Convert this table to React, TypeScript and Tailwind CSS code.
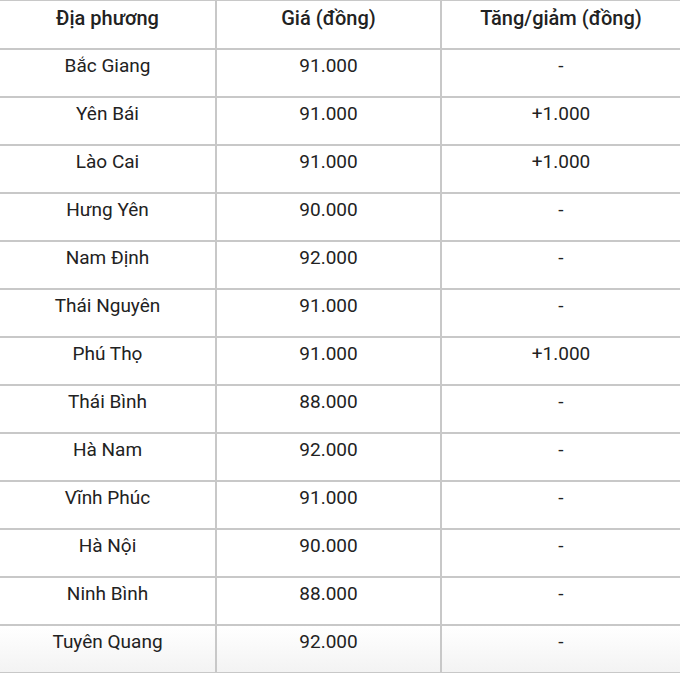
import React from "react";

const rows: [string, string, string][] = [
  ["Bắc Giang", "91.000", "-"],
  ["Yên Bái", "91.000", "+1.000"],
  ["Lào Cai", "91.000", "+1.000"],
  ["Hưng Yên", "90.000", "-"],
  ["Nam Định", "92.000", "-"],
  ["Thái Nguyên", "91.000", "-"],
  ["Phú Thọ", "91.000", "+1.000"],
  ["Thái Bình", "88.000", "-"],
  ["Hà Nam", "92.000", "-"],
  ["Vĩnh Phúc", "91.000", "-"],
  ["Hà Nội", "90.000", "-"],
  ["Ninh Bình", "88.000", "-"],
  ["Tuyên Quang", "92.000", "-"],
];

export default function App() {
  return (
    <div
      className="w-[680px] h-[673px] overflow-hidden bg-white text-[#222]"
      style={{ fontFamily: "Roboto, 'Liberation Sans', sans-serif" }}
    >
      <div className="border-t border-[#c8c8c8]">
        <div className="flex h-[49px] border-b-2 border-[#c8c8c8] font-medium text-[20px] leading-[22px]">
          <div className="w-[215px] text-center pt-[6px]">Địa phương</div>
          <div className="w-[225px] border-l-2 border-[#c8c8c8] text-center pt-[6px]">Giá (đồng)</div>
          <div className="flex-1 border-l-2 border-[#c8c8c8] text-center pt-[6px]">Tăng/giảm (đồng)</div>
        </div>
        {rows.map((r, i) => (
          <div
            key={i}
            className={
              i === rows.length - 1
                ? "flex h-[48px] border-b-2 border-[#c8c8c8] text-[19px] leading-[21px] bg-gradient-to-b from-white to-[#f3f3f3]"
                : "flex h-[48px] border-b-2 border-[#c8c8c8] text-[19px] leading-[21px]"
            }
          >
            <div className="w-[215px] text-center pt-[5px]">{r[0]}</div>
            <div className="w-[225px] border-l-2 border-[#c8c8c8] text-center pt-[5px]">{r[1]}</div>
            <div className="flex-1 border-l-2 border-[#c8c8c8] text-center pt-[5px]">{r[2]}</div>
          </div>
        ))}
      </div>
    </div>
  );
}
